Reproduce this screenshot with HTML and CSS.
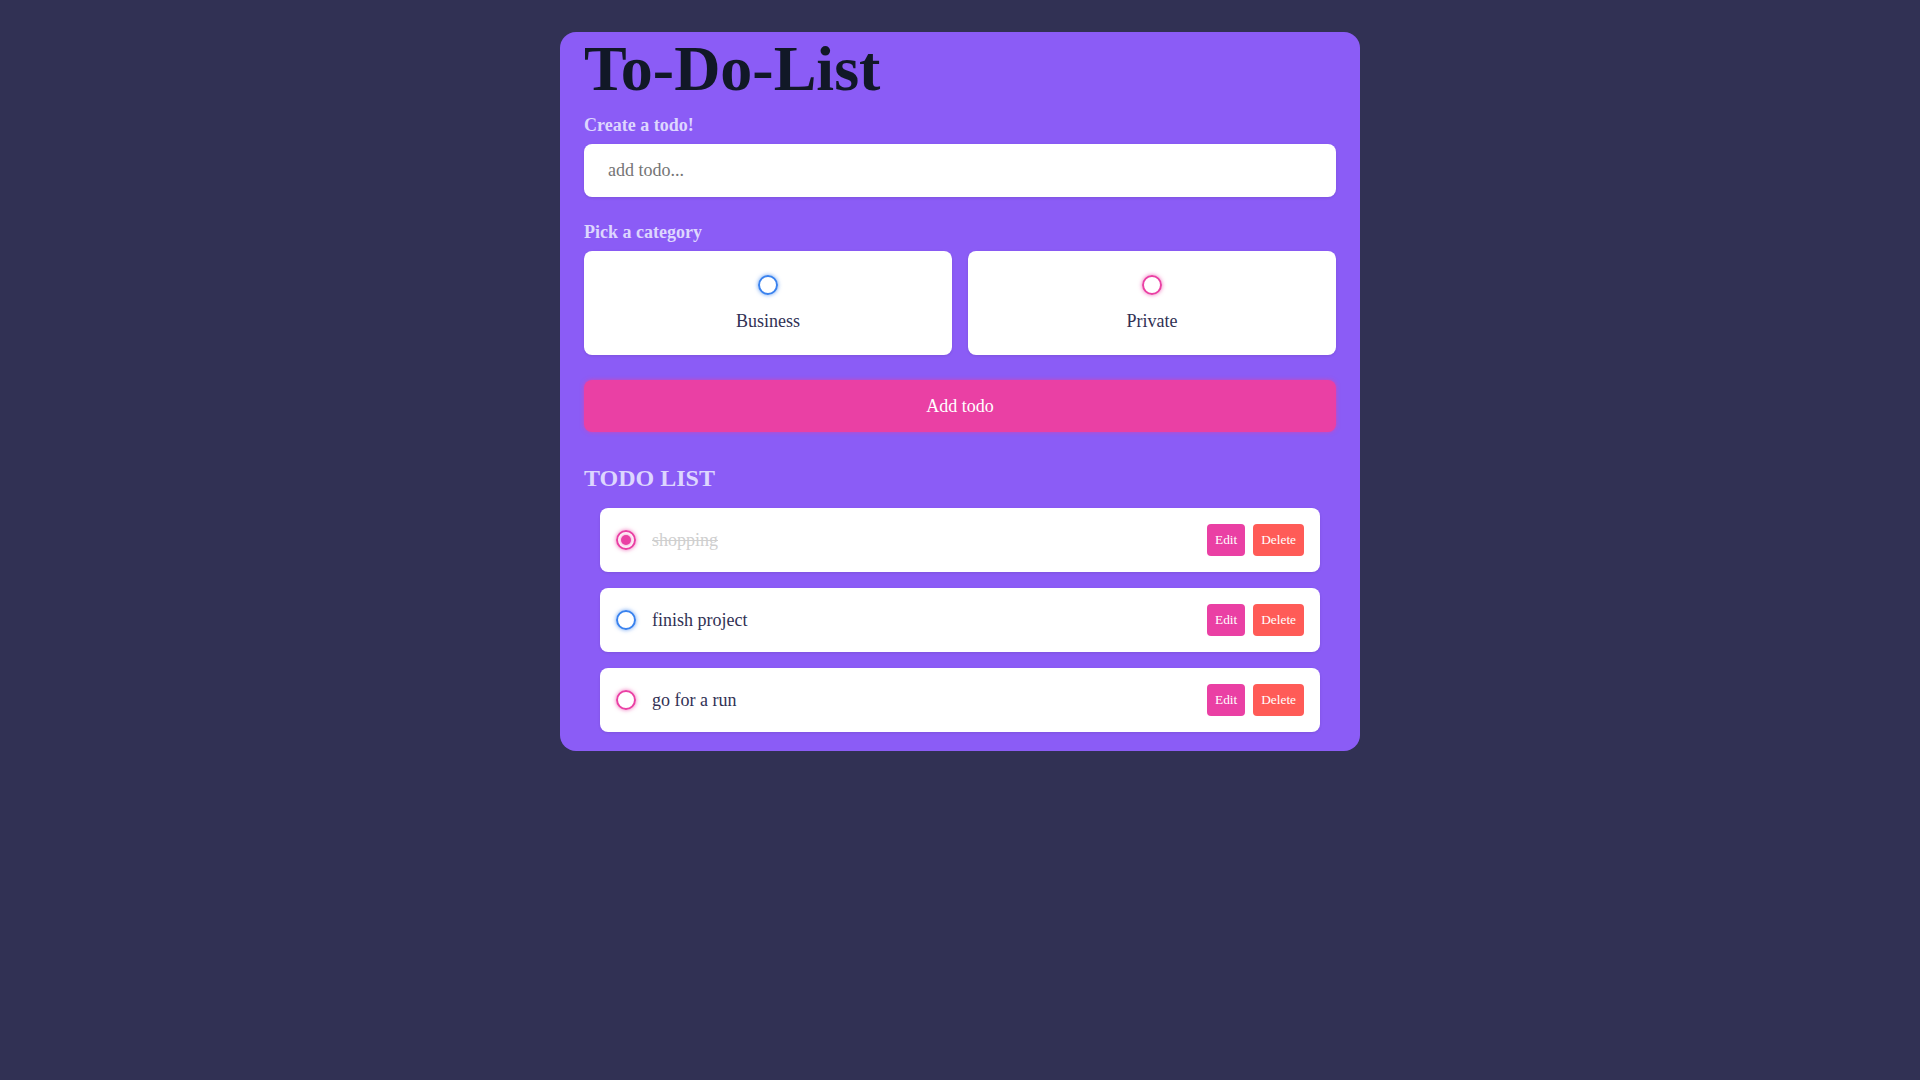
FILE: index.html
```
<!DOCTYPE html>
<html lang="en">
<head>
<meta charset="utf-8">
<title>To-Do-List</title>
<link rel="stylesheet" href="styles.css">
</head>
<body>
<main class="app">
  <h1 class="title">To-Do-List</h1>
  <section class="create">
    <h4 class="label">Create a todo!</h4>
    <input class="text-input" type="text" placeholder="add todo...">
    <h4 class="label label-cat">Pick a category</h4>
    <div class="options">
      <label class="option">
        <span class="bubble business"></span>
        <span class="option-name">Business</span>
      </label>
      <label class="option">
        <span class="bubble personal"></span>
        <span class="option-name">Private</span>
      </label>
    </div>
    <button class="submit" type="button">Add todo</button>
  </section>
  <section class="list">
    <h3 class="list-title">TODO LIST</h3>
    <div class="items">
      <div class="item done">
        <span class="bubble personal checked"></span>
        <span class="content">shopping</span>
        <div class="actions">
          <button class="btn edit" type="button">Edit</button>
          <button class="btn delete" type="button">Delete</button>
        </div>
      </div>
      <div class="item">
        <span class="bubble business"></span>
        <span class="content">finish project</span>
        <div class="actions">
          <button class="btn edit" type="button">Edit</button>
          <button class="btn delete" type="button">Delete</button>
        </div>
      </div>
      <div class="item">
        <span class="bubble personal"></span>
        <span class="content">go for a run</span>
        <div class="actions">
          <button class="btn edit" type="button">Edit</button>
          <button class="btn delete" type="button">Delete</button>
        </div>
      </div>
    </div>
  </section>
</main>
</body>
</html>
```
FILE: styles.css
```
* { box-sizing: border-box; }

html, body {
  margin: 0;
  padding: 0;
}

body {
  background: #313154;
  font-family: "Liberation Serif", "Times New Roman", serif;
  padding-top: 32px;
  min-height: 1080px;
}

.app {
  width: 800px;
  margin: 0 auto;
  background: #8b5cf6;
  border-radius: 16px;
  padding: 0 24px 19px;
}

.title {
  margin: 0 0 10px;
  font-size: 64px;
  line-height: 73px;
  font-weight: 700;
  color: #111827;
}

.label {
  margin: 0 0 9px;
  font-size: 18px;
  line-height: 20px;
  font-weight: 700;
  color: #ddd6fe;
}

.text-input {
  display: block;
  width: 100%;
  height: 53px;
  border: none;
  outline: none;
  font-family: "Liberation Serif", "Times New Roman", serif;
  font-size: 18px;
  padding: 0 24px;
  color: #313154;
  background: #fff;
  border-radius: 8px;
  box-shadow: 0 1px 3px rgba(0, 0, 0, 0.1);
  margin: 0 0 25px;
}

.text-input::placeholder {
  color: #757575;
}

.options {
  display: grid;
  grid-template-columns: 1fr 1fr;
  gap: 16px;
  margin-bottom: 25px;
}

.option {
  display: flex;
  flex-direction: column;
  align-items: center;
  justify-content: center;
  background: #fff;
  border-radius: 8px;
  box-shadow: 0 1px 3px rgba(0, 0, 0, 0.1);
  height: 104px;
}

.option-name {
  margin-top: 16px;
  font-size: 18px;
  line-height: 20px;
  color: #313154;
}

.bubble {
  display: flex;
  align-items: center;
  justify-content: center;
  width: 20px;
  height: 20px;
  border-radius: 50%;
  border: 2px solid #3a82ee;
  box-shadow: 0 0 4px rgba(58, 130, 238, 0.75);
  flex: none;
}

.bubble.personal {
  border-color: #ea40a4;
  box-shadow: 0 0 4px rgba(234, 64, 164, 0.75);
}

.bubble.checked::after {
  content: "";
  display: block;
  width: 10px;
  height: 10px;
  border-radius: 50%;
  background: #ea40a4;
  box-shadow: 0 0 4px rgba(234, 64, 164, 0.75);
}

.submit {
  display: block;
  width: 100%;
  height: 52px;
  border: none;
  border-radius: 8px;
  background: #ea40a4;
  color: #fff;
  font-family: "Liberation Serif", "Times New Roman", serif;
  font-size: 18px;
  box-shadow: 0 0 4px rgba(234, 64, 164, 0.75);
  margin: 0;
}

.list-title {
  margin: 33px 0 16px;
  font-size: 24px;
  line-height: 27px;
  font-weight: 700;
  color: #ddd6fe;
}

.items {
  display: flex;
  flex-direction: column;
  gap: 16px;
  padding: 0 16px;
}

.item {
  display: flex;
  align-items: center;
  background: #fff;
  border-radius: 8px;
  box-shadow: 0 1px 3px rgba(0, 0, 0, 0.1);
  padding: 16px;
  height: 64px;
}

.content {
  flex: 1 1 0%;
  margin-left: 16px;
  font-size: 18px;
  color: #313154;
}

.item.done .content {
  color: #cfcfcf;
  text-decoration: line-through;
}

.actions {
  display: flex;
  align-items: center;
  gap: 8px;
}

.btn {
  border: none;
  border-radius: 4px;
  padding: 0 8px;
  height: 32px;
  color: #fff;
  font-family: "Liberation Serif", "Times New Roman", serif;
  font-size: 13.333px;
}

.btn.edit {
  background: #ea40a4;
}

.btn.delete {
  background: #ff5b57;
}
```
